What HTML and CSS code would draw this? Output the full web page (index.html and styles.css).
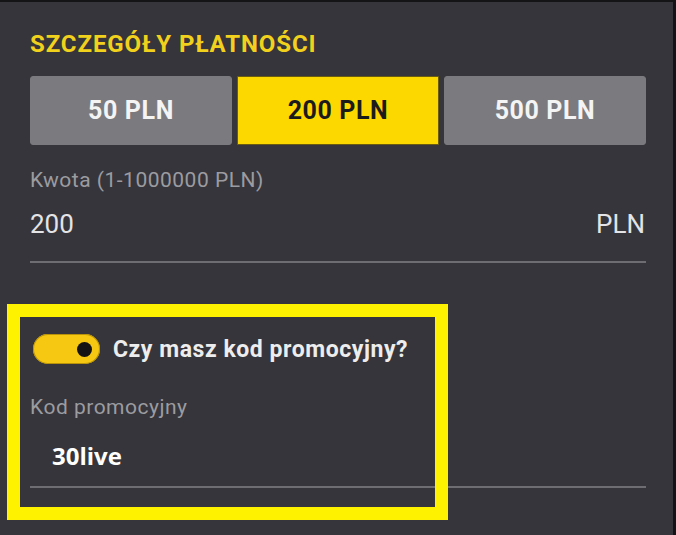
FILE: index.html
```html
<!DOCTYPE html>
<html lang="pl">
<head>
<meta charset="utf-8">
<title>Szczegóły płatności</title>
<link rel="stylesheet" href="styles.css">
</head>
<body>
<div class="page">
  <h2 class="title">SZCZEGÓŁY PŁATNOŚCI</h2>
  <div class="amounts">
    <button class="amount">50 PLN</button>
    <button class="amount active">200 PLN</button>
    <button class="amount">500 PLN</button>
  </div>
  <div class="field">
    <div class="label">Kwota (1-1000000 PLN)</div>
    <div class="value-row">
      <span class="value">200</span>
      <span class="unit">PLN</span>
    </div>
  </div>
  <div class="promo-toggle">
    <span class="switch"><span class="knob"></span></span>
    <span class="promo-text">Czy masz kod promocyjny?</span>
  </div>
  <div class="field promo-field">
    <div class="label label-promo">Kod promocyjny</div>
    <div class="code-row">
      <span class="code">30live</span>
    </div>
  </div>
  <div class="highlight"></div>
</div>
</body>
</html>
```

FILE: styles.css
```css
* { box-sizing: border-box; }
html, body { margin: 0; padding: 0; }
body {
  background: #36353b;
  font-family: Roboto, "Liberation Sans", sans-serif;
}
.page {
  position: relative;
  width: 676px;
  height: 535px;
  background: #36353b;
  border-top: 2px solid #141416;
  border-right: 3px solid #141416;
  padding: 0 27px 0 30px;
  overflow: hidden;
}
.title {
  margin: 28px 0 0 0;
  font-size: 24px;
  line-height: 28px;
  font-weight: 700;
  color: #f2d11c;
  letter-spacing: 0.9px;
}
.amounts {
  margin-top: 18px;
  display: grid;
  grid-template-columns: 1fr 1fr 1fr;
  gap: 5px;
}
.amount {
  height: 69px;
  border: 1px solid #7b7b7f;
  border-radius: 3px;
  background: #7b7b7f;
  color: #f4f4f4;
  font-family: Roboto, "Liberation Sans", sans-serif;
  font-weight: 700;
  font-size: 25px;
  letter-spacing: 0.6px;
  display: flex;
  align-items: center;
  justify-content: center;
  padding: 0;
}
.amount.active {
  background: #fdd800;
  border-color: #6a5c10;
  border-radius: 1px;
  color: #1b1b1b;
}
.field {
  margin-top: 22px;
  border-bottom: 2px solid #6e6e72;
}
.label {
  font-size: 21px;
  line-height: 26px;
  color: #9c9ca0;
  letter-spacing: 0.5px;
}
.value-row {
  margin-top: 16px;
  padding-bottom: 22px;
  display: flex;
  justify-content: space-between;
  align-items: baseline;
  font-size: 26px;
  line-height: 30px;
  color: #e4e4e6;
}
.unit { margin-right: 1px; }
.promo-toggle {
  margin-top: 71px;
  display: flex;
  align-items: center;
  gap: 13px;
  padding-left: 3px;
}
.switch {
  width: 67px;
  height: 30px;
  border-radius: 15px;
  background: #f6c812;
  box-shadow: inset 0 0 0 1px #b8930a;
  display: flex;
  align-items: center;
  justify-content: flex-end;
  padding-right: 8px;
}
.knob {
  width: 15px;
  height: 15px;
  border-radius: 50%;
  background: #141414;
}
.promo-text {
  font-size: 23px;
  font-weight: 700;
  color: #ededee;
  letter-spacing: 0.55px;
}
.promo-field { margin-top: 30px; }
.code-row {
  margin-top: 20px;
  padding: 0 0 14px 22px;
  font-family: "Open Sans", "DejaVu Sans", sans-serif;
  font-size: 24px;
  line-height: 32px;
  font-weight: 700;
  color: #ffffff;
}
.highlight {
  position: absolute;
  left: 7px;
  top: 302px;
  width: 441px;
  height: 216px;
  border: 13px solid #fff200;
  pointer-events: none;
}
```
